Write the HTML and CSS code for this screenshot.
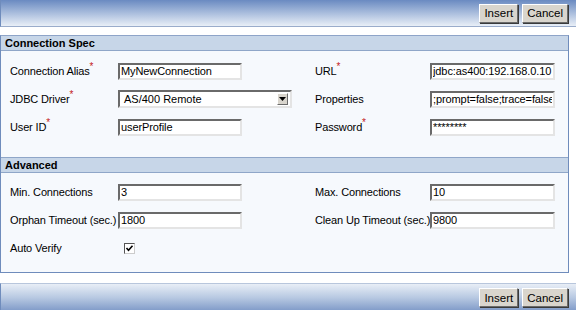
FILE: index.html
```html
<!DOCTYPE html>
<html lang="en">
  <head>
    <meta charset="UTF-8" />
    <title>New Connection</title>
    <link rel="stylesheet" href="styles.css">
  </head>
  <body>
    <div class="toolbar toolbar-top">
      <button class="btn">Insert</button>
      <button class="btn">Cancel</button>
    </div>

    <div class="panel">
      <div class="panel-header">Connection Spec</div>
      <div class="form-grid">
        <label>Connection Alias<span class="req">*</span></label>
        <div><input class="field" type="text" value="MyNewConnection" /></div>
        <label>URL<span class="req">*</span></label>
        <div><input class="field field-right" type="text" value="jdbc:as400:192.168.0.10" /></div>

        <label>JDBC Driver<span class="req">*</span></label>
        <div>
          <div class="select">
            <span class="select-value">AS/400 Remote</span>
            <span class="select-arrow">
              <svg width="7" height="4" viewBox="0 0 7 4"><path d="M0 0h7L3.5 4z" fill="#000"/></svg>
            </span>
          </div>
        </div>
        <label>Properties</label>
        <div><input class="field field-right" type="text" value=";prompt=false;trace=false" /></div>

        <label>User ID<span class="req">*</span></label>
        <div><input class="field" type="text" value="userProfile" /></div>
        <label>Password<span class="req">*</span></label>
        <div><input class="field field-right" type="text" value="********" /></div>
      </div>

      <div class="panel-header panel-header-sub">Advanced</div>
      <div class="form-grid form-grid-adv">
        <label>Min. Connections</label>
        <div><input class="field" type="text" value="3" /></div>
        <label>Max. Connections</label>
        <div><input class="field field-right" type="text" value="10" /></div>

        <label>Orphan Timeout (sec.)</label>
        <div><input class="field" type="text" value="1800" /></div>
        <label>Clean Up Timeout (sec.)</label>
        <div><input class="field field-right" type="text" value="9800" /></div>

        <label>Auto Verify</label>
        <div>
          <span class="check">
            <svg width="9" height="9" viewBox="0 0 9 9"><path d="M1.5 4l2 2.2L7.5 1.8" fill="none" stroke="#000" stroke-width="1.6"/></svg>
          </span>
        </div>
      </div>
    </div>

    <div class="toolbar toolbar-bottom">
      <button class="btn">Insert</button>
      <button class="btn">Cancel</button>
    </div>
  </body>
</html>
```

FILE: styles.css
```css
* {
  margin: 0;
  padding: 0;
  box-sizing: border-box;
  font-family: "Liberation Sans", Arial, sans-serif;
}

body {
  background: #ffffff;
  font-size: 11px;
  color: #000;
  width: 576px;
  height: 310px;
  overflow: hidden;
}

.toolbar {
  display: flex;
  justify-content: flex-end;
  align-items: center;
  gap: 4px;
  height: 27px;
  padding-right: 8px;
  border-left: 1px solid #6f8cbc;
}

.toolbar-top {
  background: linear-gradient(to bottom, #6a8ac1 0%, #a3b8da 45%, #e9eff7 100%);
  border-bottom: 1px solid #9aaccb;
}

.toolbar-bottom {
  margin-top: 10px;
  height: 28px;
  background: linear-gradient(to bottom, #e8eef6 0%, #b8c9e2 50%, #7f9ac8 100%);
  border-top: 1px solid #b8c6dc;
}

.btn {
  font-size: 11.5px;
  background: #d9d5cd;
  color: #000;
  height: 19px;
  padding: 0 4px;
  border: 1px solid;
  border-color: #ffffff #6b6b6b #6b6b6b #ffffff;
  box-shadow: 1px 1px 0 #3a3a3a;
}

.panel {
  margin-top: 8px;
  width: 569px;
  height: 238px;
  border: 1px solid #6f8cbc;
  border-top-color: #8ea4c8;
  background: #f6f9fd;
}

.panel-header {
  height: 15px;
  line-height: 14px;
  padding-left: 4px;
  font-weight: bold;
  font-size: 11px;
  background: #c7d6e8;
  border-bottom: 1px solid #8fa6c8;
}

.panel-header-sub {
  border-top: 1px solid #8fa6c8;
  height: 16px;
}

.form-grid {
  display: grid;
  grid-template-columns: 108px 197px 115px 140px;
  grid-auto-rows: 28px;
  align-items: center;
  padding: 6px 0 16px 9px;
}

.form-grid-adv {
  padding-top: 5px;
}

label {
  font-size: 11px;
  letter-spacing: -0.15px;
  white-space: nowrap;
}

.req {
  color: #c41b1b;
  font-size: 10px;
  position: relative;
  top: -5px;
}

.field {
  display: block;
  width: 124px;
  height: 17px;
  font-size: 11px;
  letter-spacing: -0.1px;
  padding: 0 1px;
  background: #ffffff;
  color: #000;
  border: 2px solid;
  border-color: #6a6a6a #e4e4e4 #e4e4e4 #6a6a6a;
  outline: none;
}

.field-right {
  width: 125px;
}

.select {
  display: flex;
  align-items: center;
  width: 174px;
  height: 18px;
  background: #ffffff;
  border: 2px solid;
  border-color: #6a6a6a #e4e4e4 #e4e4e4 #6a6a6a;
}

.select-value {
  flex: 1;
  padding-left: 4px;
  line-height: 14px;
}

.select-arrow {
  display: flex;
  align-items: center;
  justify-content: center;
  width: 11px;
  height: 12px;
  margin-right: 2px;
  background: #d9d5cd;
  border: 1px solid;
  border-color: #ffffff #6b6b6b #6b6b6b #ffffff;
}

.check {
  display: flex;
  align-items: center;
  justify-content: center;
  width: 11px;
  height: 11px;
  margin-left: 6px;
  background: #ffffff;
  border: 1px solid #555;
  border-right-color: #ccc;
  border-bottom-color: #ccc;
}
```
